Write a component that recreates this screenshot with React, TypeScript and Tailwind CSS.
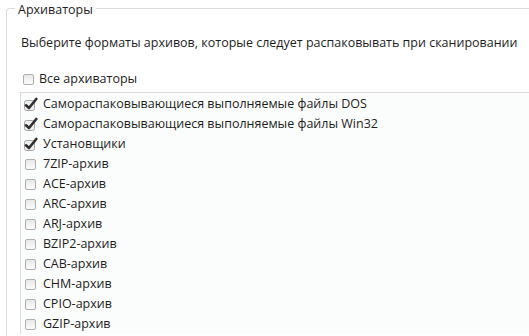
import React from "react";

const items: [string, boolean][] = [
  ["Самораспаковывающиеся выполняемые файлы DOS", true],
  ["Самораспаковывающиеся выполняемые файлы Win32", true],
  ["Установщики", true],
  ["7ZIP-архив", false],
  ["ACE-архив", false],
  ["ARC-архив", false],
  ["ARJ-архив", false],
  ["BZIP2-архив", false],
  ["CAB-архив", false],
  ["CHM-архив", false],
  ["CPIO-архив", false],
  ["GZIP-архив", false],
];

function Box() {
  return (
    <span className="inline-block w-[11px] h-[11px] rounded-[2px] border border-[#b0b0b0] bg-gradient-to-b from-[#e8e8e8] to-[#fbfbfb] shrink-0" />
  );
}

function Checked() {
  return (
    <svg width="14" height="14" viewBox="0 0 14 14" className="shrink-0">
      <rect x="0.5" y="3.5" width="10" height="10" rx="2" fill="#efefef" stroke="#a5a5a5" />
      <path d="M2 8.3 L5 11 L12.3 2" fill="none" stroke="#2f2f2f" strokeWidth="2.6" strokeLinecap="round" strokeLinejoin="round" />
    </svg>
  );
}

export default function App() {
  return (
    <div className="w-[529px] h-[336px] bg-white overflow-hidden text-[12px] text-[#1e1e1e]" style={{ fontFamily: '"Open Sans", "Noto Sans", sans-serif' }}>
      <div className="relative ml-[6px] mt-[8px] h-[340px] border-l border-t border-[#dcdcdc] rounded-tl-[4px]">
        <div className="absolute left-[8px] top-[-7px] bg-white px-[3px] leading-[16px] text-[12.5px]">Архиваторы</div>
        <div className="pl-[14px] pt-[26px] leading-[16px] text-[12.5px]">Выберите форматы архивов, которые следует распаковывать при сканировании</div>
        <div className="flex items-center pl-[16px] mt-[18px] h-[20px] gap-[5px]">
          <Box />
          <span className="text-[12.5px]">Все архиваторы</span>
        </div>
        <div className="ml-[13px] mt-[3px] border-l border-t border-[#dcdcdc] bg-[#fbfcfc] pt-[1px]">
          {items.map(([label, checked]) => (
            <div key={label} className="flex items-center h-[20px] pl-[3px]">
              {checked ? (
                <span className="flex w-[19px]"><Checked /></span>
              ) : (
                <span className="flex w-[19px] pl-[1px]"><Box /></span>
              )}
              <span className="text-[12.5px]">{label}</span>
            </div>
          ))}
        </div>
      </div>
    </div>
  );
}
